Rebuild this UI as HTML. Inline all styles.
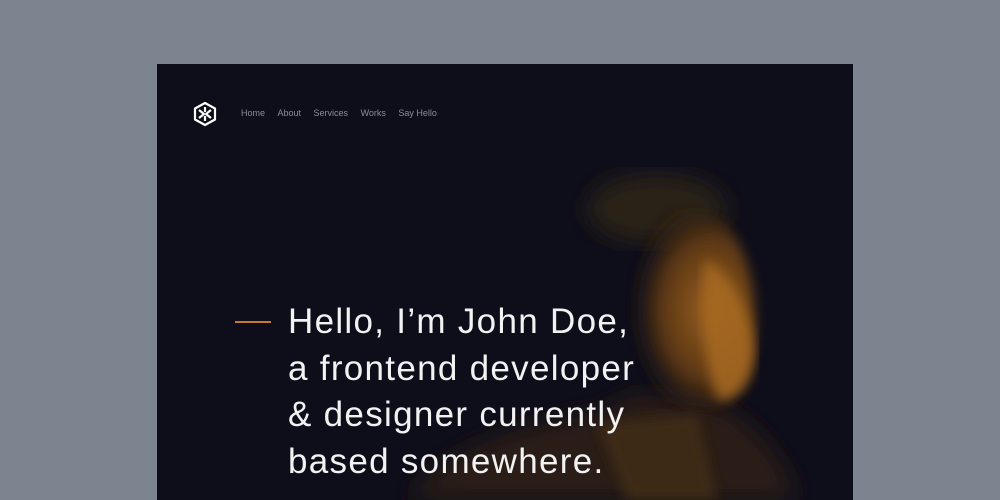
<!DOCTYPE html>
<html><head><style>
html,body{margin:0;padding:0}
body{width:1000px;height:500px;background:#7c858f;position:relative;overflow:hidden;font-family:"Liberation Sans",sans-serif}
.card{position:absolute;left:157px;top:64px;width:696px;height:436px;background:#0e0e1b;overflow:hidden}
.nav{position:absolute;top:44px;left:84px;font-size:9px;color:#8a8c9c}
.nav span{margin-right:12.5px}
.h{position:absolute;left:131px;top:235px;color:#f2f2f2;font-size:35px;line-height:46.5px;letter-spacing:1.3px}
.dash{position:absolute;left:78px;top:257px;width:36px;height:2px;background:#c9782a}
</style></head><body>
<div class="card">
<svg width="696" height="436" style="position:absolute;left:0;top:0">
<defs>
<filter id="b"><feGaussianBlur stdDeviation="12"/></filter>
<filter id="b2"><feGaussianBlur stdDeviation="6"/></filter>
<radialGradient id="f" cx="0.7" cy="0.5" r="0.6"><stop offset="0" stop-color="#9a6020"/><stop offset="0.6" stop-color="#5a3614"/><stop offset="1" stop-color="#1a1410" stop-opacity="0"/></radialGradient>
</defs>
<path d="M250 436 C280 390 360 360 440 350 L480 330 L560 340 C600 360 630 400 640 436 Z" fill="#2c1e12" filter="url(#b)"/>
<path d="M440 360 L470 436 L560 436 L540 350 Z" fill="#3e2a16" filter="url(#b2)"/>
<ellipse cx="500" cy="145" rx="70" ry="35" fill="#2a2018" filter="url(#b)"/>
<path d="M455 210 C460 150 520 130 570 160 C600 200 605 260 590 320 C570 350 530 350 510 335 C480 320 460 280 455 210 Z" fill="url(#f)" filter="url(#b2)"/>
<path d="M548 195 C575 210 600 260 597 295 C592 325 575 340 560 335 C548 300 542 250 548 195Z" fill="#a86a22" opacity="0.85" filter="url(#b2)"/>
</svg>
<svg style="position:absolute;left:35px;top:37px" width="26" height="26" viewBox="0 0 26 26" fill="none" stroke="#fff" stroke-width="2.2" stroke-linejoin="round"><path d="M13 2 L23 7.5 V18.5 L13 24 L3 18.5 V7.5 Z"/><path d="M13 6 V11 M7 9 L12 13 L7 17 M19 9 L14 13 L19 17 M13 15 V20"/></svg>
<div class="nav"><span>Home</span><span>About</span><span>Services</span><span>Works</span><span>Say Hello</span></div>
<div class="dash"></div>
<div class="h">Hello, I’m John Doe,<br>a frontend developer<br>&amp; designer currently<br>based somewhere.</div>
</div>
</body></html>
